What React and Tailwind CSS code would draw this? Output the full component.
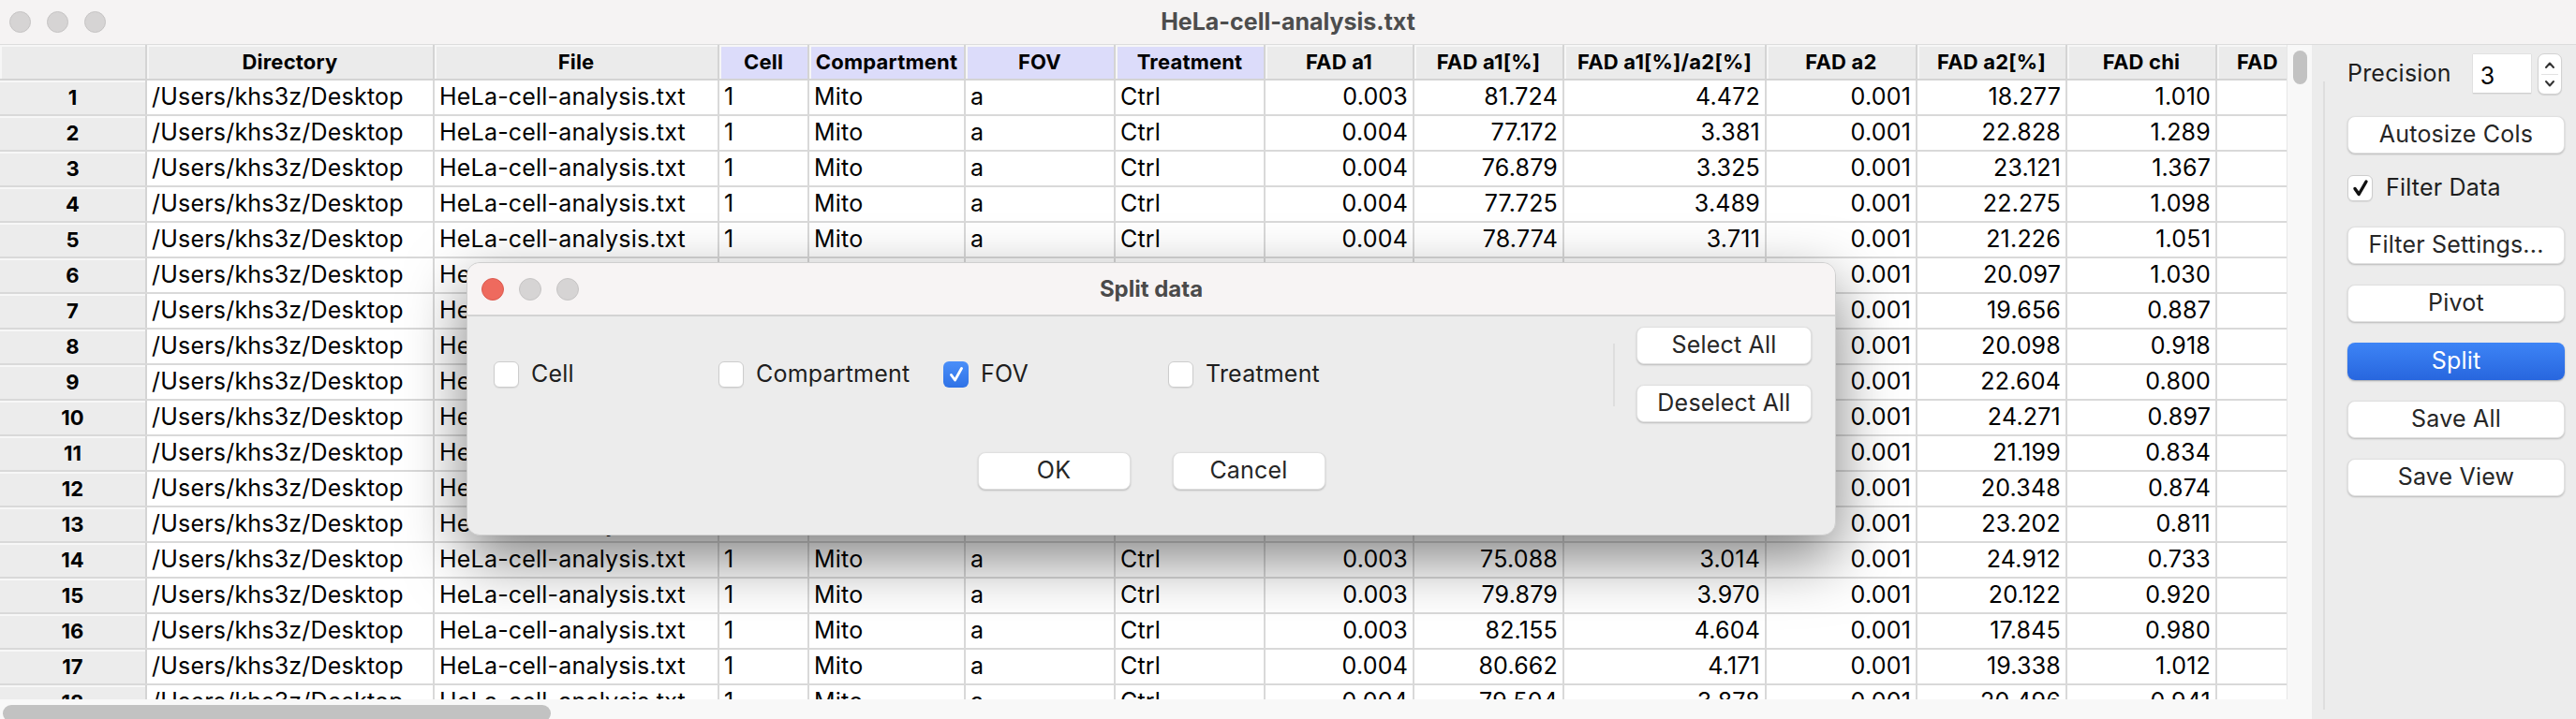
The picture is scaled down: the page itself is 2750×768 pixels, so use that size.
import React from "react";

const COLS = [
  { label: "Directory", w: "w-[307px]", num: false, hl: false },
  { label: "File", w: "w-[304px]", num: false, hl: false },
  { label: "Cell", w: "w-[96px]", num: false, hl: true },
  { label: "Compartment", w: "w-[167px]", num: false, hl: true },
  { label: "FOV", w: "w-[160px]", num: false, hl: true },
  { label: "Treatment", w: "w-[160px]", num: false, hl: true },
  { label: "FAD a1", w: "w-[159px]", num: true, hl: false },
  { label: "FAD a1[%]", w: "w-[160px]", num: true, hl: false },
  { label: "FAD a1[%]/a2[%]", w: "w-[216px]", num: true, hl: false },
  { label: "FAD a2", w: "w-[161px]", num: true, hl: false },
  { label: "FAD a2[%]", w: "w-[160px]", num: true, hl: false },
  { label: "FAD chi", w: "w-[160px]", num: true, hl: false },
];

const NUMS = [
  ["0.003", "81.724", "4.472", "0.001", "18.277", "1.010"],
  ["0.004", "77.172", "3.381", "0.001", "22.828", "1.289"],
  ["0.004", "76.879", "3.325", "0.001", "23.121", "1.367"],
  ["0.004", "77.725", "3.489", "0.001", "22.275", "1.098"],
  ["0.004", "78.774", "3.711", "0.001", "21.226", "1.051"],
  ["0.004", "79.903", "3.976", "0.001", "20.097", "1.030"],
  ["0.004", "80.344", "4.087", "0.001", "19.656", "0.887"],
  ["0.004", "79.902", "3.975", "0.001", "20.098", "0.918"],
  ["0.003", "77.396", "3.424", "0.001", "22.604", "0.800"],
  ["0.003", "75.729", "3.120", "0.001", "24.271", "0.897"],
  ["0.004", "78.801", "3.717", "0.001", "21.199", "0.834"],
  ["0.004", "79.652", "3.914", "0.001", "20.348", "0.874"],
  ["0.003", "76.798", "3.310", "0.001", "23.202", "0.811"],
  ["0.003", "75.088", "3.014", "0.001", "24.912", "0.733"],
  ["0.003", "79.879", "3.970", "0.001", "20.122", "0.920"],
  ["0.003", "82.155", "4.604", "0.001", "17.845", "0.980"],
  ["0.004", "80.662", "4.171", "0.001", "19.338", "1.012"],
  ["0.004", "79.504", "3.878", "0.001", "20.496", "0.941"],
];

const ROWS = NUMS.map((n) => [
  "/Users/khs3z/Desktop",
  "HeLa-cell-analysis.txt",
  "1",
  "Mito",
  "a",
  "Ctrl",
  ...n,
]);

function Dot({ color = "bg-[#d6d4d4] border-[#c6c4c4]", size = "w-[23px] h-[23px]" }) {
  return <div className={`${size} ${color} rounded-full border shrink-0`} />;
}

function MacButton({ children, primary = false, className = "" }) {
  return (
    <div
      className={`h-[40px] flex items-center justify-center rounded-[8px] text-[25px] tracking-[0.2px] ${
        primary
          ? "bg-gradient-to-b from-[#3d84f6] to-[#2866de] text-white shadow-[0_1px_2px_rgba(0,0,0,0.3)]"
          : "bg-white text-[#262626] border border-[#e0e0e0] shadow-[0_1px_2px_rgba(0,0,0,0.22)]"
      } ${className}`}
    >
      {children}
    </div>
  );
}

function Check({ checked = false, blue = false }) {
  if (blue) {
    return (
      <div className="w-[27px] h-[28px] rounded-[6px] bg-gradient-to-b from-[#4a8ff9] to-[#2f72e6] flex items-center justify-center shrink-0">
        <svg width="16" height="18" viewBox="0 0 16 18">
          <path d="M2.5 9.5 L6.5 15 L13.5 2.5" fill="none" stroke="white" strokeWidth="2.8" strokeLinecap="round" strokeLinejoin="round" />
        </svg>
      </div>
    );
  }
  return (
    <div className="w-[27px] h-[28px] rounded-[6px] bg-white border border-[#cdcdcd] shadow-[0_1px_1px_rgba(0,0,0,0.08)] flex items-center justify-center shrink-0">
      {checked && (
        <svg width="18" height="20" viewBox="0 0 18 20">
          <path d="M3 10.5 L7.2 16.5 L15 3" fill="none" stroke="#111" strokeWidth="3.4" strokeLinecap="round" strokeLinejoin="round" />
        </svg>
      )}
    </div>
  );
}

function Table() {
  return (
    <div className="w-[2441px] h-[699px] overflow-hidden bg-white">
      <div className="flex h-[38px] bg-[#ebebeb] border-b-2 border-[#d4d4d4] w-max">
        <div className="w-[157px] shrink-0 border-r-2 border-[#d4d4d4] shadow-[inset_2px_2px_0_#f6f6f6]" />
        {COLS.map((c) => (
          <div
            key={c.label}
            className={`${c.w} shrink-0 flex items-center justify-center border-r-2 border-[#d4d4d4] text-[22px] tracking-[0.2px] font-bold text-black whitespace-nowrap overflow-hidden shadow-[inset_2px_2px_0_#f6f6f6] ${
              c.hl ? "bg-[#dcdcfa]" : ""
            }`}
          >
            {c.label}
          </div>
        ))}
        <div className="w-[160px] shrink-0 flex items-center pl-[21px] text-[22px] tracking-[0.2px] font-bold text-black shadow-[inset_2px_2px_0_#f6f6f6]">
          FAD
        </div>
      </div>
      {ROWS.map((r, i) => (
        <div key={i} className="flex h-[38px] border-b-2 border-[#d9d9d9] w-max">
          <div className="w-[157px] shrink-0 flex items-center justify-center bg-[#ececec] border-r-2 border-[#d4d4d4] text-[22px] font-bold text-black shadow-[inset_0_2px_0_#f7f7f7]">
            {i + 1}
          </div>
          {COLS.map((c, j) => (
            <div
              key={j}
              className={`${c.w} shrink-0 flex items-center border-r-2 border-[#d9d9d9] text-[25px] tracking-[0.2px] text-black whitespace-nowrap overflow-hidden ${
                c.num ? "justify-end pr-[5px]" : "pl-[5px]"
              }`}
            >
              {r[j]}
            </div>
          ))}
          <div className="w-[160px] shrink-0" />
        </div>
      ))}
    </div>
  );
}

function RightPanel() {
  return (
    <div className="w-[282px] h-full bg-[#ececec] flex">
      <div className="w-[2px] mt-[39px] mb-[10px] ml-[12px] bg-[#dedede] shrink-0" />
      <div className="flex flex-col ml-[24px] w-[232px]">
        <div className="mt-[9px] h-[44px] flex items-center">
          <span className="text-[25px] tracking-[0.2px] text-[#1e1e1e]">Precision</span>
          <div className="ml-[23px] w-[62px] h-[42px] bg-white border-b border-[#d0d0d0] shadow-[0_0_1px_rgba(0,0,0,0.25)] flex items-center pl-[8px] pt-[6px] text-[25px] text-black">
            3
          </div>
          <div className="ml-[7px] w-[26px] h-[44px] bg-white rounded-[7px] border border-[#d2d2d2] shadow-[0_1px_1px_rgba(0,0,0,0.12)] flex flex-col items-center justify-center">
            <svg width="14" height="14" viewBox="0 0 14 14">
              <path d="M3 9 L7 4.5 L11 9" fill="none" stroke="#333" strokeWidth="2" strokeLinecap="round" strokeLinejoin="round" />
            </svg>
            <div className="w-[18px] h-px bg-[#e2e2e2] my-[2px]" />
            <svg width="14" height="14" viewBox="0 0 14 14">
              <path d="M3 5 L7 9.5 L11 5" fill="none" stroke="#333" strokeWidth="2" strokeLinecap="round" strokeLinejoin="round" />
            </svg>
          </div>
        </div>
        <MacButton className="mt-[23px]">Autosize Cols</MacButton>
        <div className="mt-[17px] h-[40px] flex items-center">
          <Check checked />
          <span className="ml-[14px] text-[25px] tracking-[0.2px] text-[#1e1e1e]">Filter Data</span>
        </div>
        <MacButton className="mt-[21px]">Filter Settings...</MacButton>
        <MacButton className="mt-[22px]">Pivot</MacButton>
        <MacButton className="mt-[22px]" primary>Split</MacButton>
        <MacButton className="mt-[22px]">Save All</MacButton>
        <MacButton className="mt-[22px]">Save View</MacButton>
      </div>
    </div>
  );
}

function SplitDialog() {
  const items = [
    { label: "Cell", checked: false },
    { label: "Compartment", checked: false },
    { label: "FOV", checked: true },
    { label: "Treatment", checked: false },
  ];
  return (
    <div className="absolute left-[498px] top-[280px] w-[1462px] h-[292px] rounded-[14px] overflow-hidden bg-[#ececec] border border-[#cfcfcf] shadow-[0_24px_64px_rgba(0,0,0,0.5)] flex flex-col">
      <div className="h-[57px] shrink-0 bg-[#f7f4f4] border-b-2 border-[#d3d3d3] relative flex items-center pl-[15px] gap-[16px]">
        <Dot size="w-[24px] h-[24px]" color="bg-[#ee6a5e] border-[#dc5a4f]" />
        <Dot size="w-[24px] h-[24px]" />
        <Dot size="w-[24px] h-[24px]" />
        <div className="absolute inset-0 flex items-center justify-center text-[24px] font-bold text-[#4a4a4a]">
          Split data
        </div>
      </div>
      <div className="flex pt-[11px] pr-[25px]">
        <div className="flex-1 flex items-center pl-[28px]">
          {items.map((it) => (
            <div key={it.label} className="w-[240px] flex items-center">
              <Check blue={it.checked} />
              <span className="ml-[13px] text-[25px] tracking-[0.2px] text-[#1e1e1e]">{it.label}</span>
            </div>
          ))}
        </div>
        <div className="w-[2px] h-[67px] self-center bg-[#dedede] mr-[23px]" />
        <div className="flex flex-col gap-[22px] w-[187px]">
          <MacButton>Select All</MacButton>
          <MacButton>Deselect All</MacButton>
        </div>
      </div>
      <div className="flex justify-center gap-[45px] mt-[32px]">
        <MacButton className="w-[163px]">OK</MacButton>
        <MacButton className="w-[163px]">Cancel</MacButton>
      </div>
    </div>
  );
}

export default function App() {
  return (
    <div className="relative w-[2750px] h-[768px] overflow-hidden bg-[#ececec] font-[Inter,'Liberation_Sans',sans-serif] flex flex-col">
      <div className="h-[48px] shrink-0 bg-[#f5f3f3] border-b border-[#dcdcdc] relative flex items-center pl-[10px] gap-[17px]">
        <Dot />
        <Dot />
        <Dot />
        <div className="absolute inset-0 flex items-center justify-center text-[25px] font-bold text-[#4d4d4d]">
          HeLa-cell-analysis.txt
        </div>
      </div>
      <div className="flex flex-1 min-h-0">
        <div className="w-[2468px] flex flex-col">
          <div className="flex">
            <Table />
            <div className="w-[27px] h-[699px] bg-[#f8f8f8] border-l border-[#e6e6e6] pl-[6px] pt-[6px]">
              <div className="w-[15px] h-[36px] rounded-full bg-[#c2c2c2]" />
            </div>
          </div>
          <div className="h-[21px] bg-[#f8f8f8] pl-[3px] pt-[6px]">
            <div className="w-[585px] h-[18px] rounded-full bg-[#c2c2c2]" />
          </div>
        </div>
        <RightPanel />
      </div>
      <SplitDialog />
    </div>
  );
}
